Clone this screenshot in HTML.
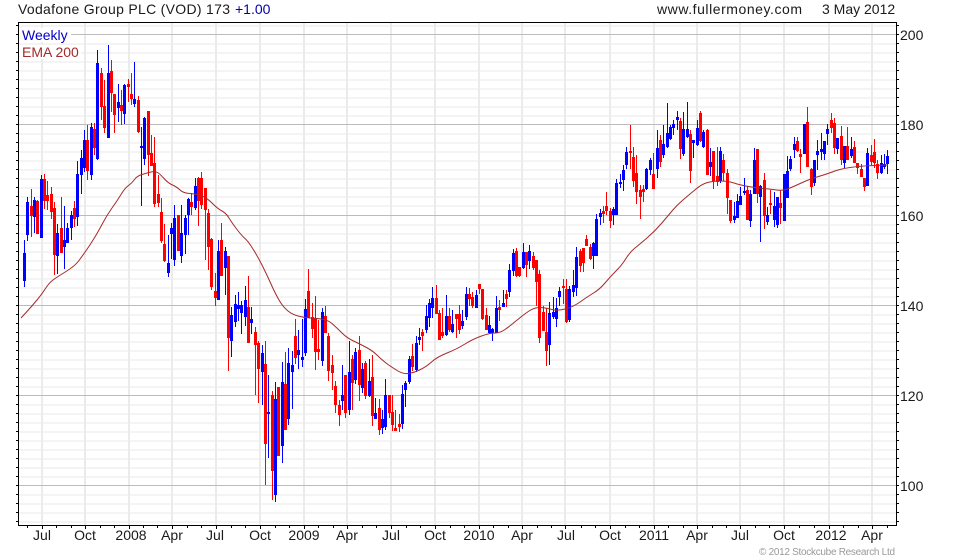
<!DOCTYPE html>
<html><head><meta charset="utf-8"><title>VOD</title>
<style>html,body{margin:0;padding:0;background:#fff;width:980px;height:560px;overflow:hidden}svg{display:block}text{font-family:"Liberation Sans",Arial,sans-serif;font-size:14px;fill:#1a1a1a}</style></head>
<body>
<svg width="980" height="560" viewBox="0 0 980 560" xmlns="http://www.w3.org/2000/svg">
<rect width="980" height="560" fill="#fff"/>
<g shape-rendering="crispEdges">
<path stroke="#f4f4f4" stroke-width="2" transform="translate(0,.5)" fill="none" d="M18 25.5H896M18 43.5H896M18 52.5H896M18 61.5H896M18 70.5H896M18 79.5H896M18 88.5H896M18 97.5H896M18 106.5H896M18 115.5H896M18 133.5H896M18 142.5H896M18 151.5H896M18 160.5H896M18 169.5H896M18 178.5H896M18 187.5H896M18 196.5H896M18 205.5H896M18 224.5H896M18 233.5H896M18 242.5H896M18 251.5H896M18 260.5H896M18 269.5H896M18 278.5H896M18 287.5H896M18 296.5H896M18 314.5H896M18 323.5H896M18 332.5H896M18 341.5H896M18 350.5H896M18 359.5H896M18 368.5H896M18 377.5H896M18 386.5H896M18 404.5H896M18 413.5H896M18 422.5H896M18 431.5H896M18 440.5H896M18 449.5H896M18 458.5H896M18 467.5H896M18 476.5H896M18 494.5H896M18 503.5H896M18 512.5H896M18 521.5H896"/>
<path stroke="#ebebeb" stroke-width="2" transform="translate(-.5,0)" fill="none" d="M42.5 22V525M85.5 22V525M129.5 22V525M172.5 22V525M216.5 22V525M260.5 22V525M304.5 22V525M347.5 22V525M391.5 22V525M435.5 22V525M479.5 22V525M522.5 22V525M565.5 22V525M610.5 22V525M654.5 22V525M697.5 22V525M740.5 22V525M784.5 22V525M829.5 22V525M872.5 22V525"/>
<path stroke="#bbb" fill="none" d="M18 34.5H896M18 124.5H896M18 215.5H896M18 305.5H896M18 395.5H896M18 485.5H896"/>
<rect x="19" y="28" width="52" height="14" fill="#fff"/>
<rect x="19" y="45" width="62" height="14" fill="#fff"/>
<path stroke="#00f" fill="none" d="M24.5 240V287M27.5 197V241M34.5 197V233M41.5 175V238M57.5 224V274M64.5 206V269M67.5 223V243M71.5 211V240M77.5 161V226M81.5 150V194M84.5 130V172M91.5 123V180M97.5 50V160M108.5 45V138M118.5 84V122M124.5 84V124M134.5 62V107M141.5 127V206M144.5 117V165M168.5 235V277M171.5 223V259M174.5 205V266M181.5 205V263M185.5 215V254M188.5 198V235M195.5 178V210M218.5 240V300M225.5 247V295M231.5 307V357M235.5 295V327M238.5 292V321M241.5 301V334M245.5 286V326M251.5 307V334M262.5 345V405M268.5 375V458M275.5 382V502M282.5 362V463M288.5 348V425M292.5 351V409M298.5 330V369M302.5 319V367M305.5 299V356M322.5 308V366M342.5 365V410M349.5 341V415M355.5 348V384M362.5 363V393M369.5 359V397M375.5 398V419M382.5 410V434M385.5 379V430M402.5 385V429M405.5 381V407M409.5 356V384M416.5 336V372M419.5 328V345M426.5 305V333M429.5 299V327M432.5 287V318M446.5 295V336M452.5 310V333M462.5 310V329M466.5 287V320M476.5 290V308M489.5 316V334M492.5 328V341M496.5 296V333M503.5 290V307M509.5 264V297M513.5 249V276M523.5 243V269M529.5 245V269M549.5 302V365M553.5 297V319M556.5 298V327M559.5 287V306M569.5 286V322M573.5 270V297M576.5 247V296M593.5 242V269M596.5 214V256M600.5 209V225M613.5 207V225M616.5 179V215M620.5 174V188M623.5 165V191M626.5 147V169M646.5 168V190M650.5 158V175M657.5 130V178M663.5 125V158M667.5 103V148M670.5 125V140M673.5 120V135M677.5 111V130M683.5 112V156M687.5 102V138M693.5 140V158M697.5 120V146M703.5 130V148M710.5 148V176M720.5 147V183M734.5 202V223M737.5 194V218M740.5 187V205M744.5 178V195M750.5 190V227M754.5 148V194M760.5 185V242M767.5 207V225M774.5 192V227M777.5 197V228M784.5 174V221M787.5 156V198M790.5 156V171M794.5 137V158M804.5 124V154M814.5 160V186M817.5 140V170M821.5 133V160M824.5 141V160M827.5 124V145M837.5 138V154M844.5 146V168M851.5 137V158M867.5 148V186M881.5 155V174M884.5 154V169M887.5 150V174"/>
<path stroke="#00f" stroke-width="3" fill="none" d="M24.5 253V281M27.5 202V235M34.5 200V217M41.5 179V238M57.5 233V256M64.5 240V247M67.5 228V243M71.5 215V228M77.5 174V217M81.5 158V175M84.5 140V168M91.5 127V175M97.5 63V159M108.5 73V138M118.5 102V108M124.5 85V114M134.5 99V104M141.5 146V148M144.5 118V159M168.5 263V273M171.5 228V234M174.5 218V260M181.5 233V256M185.5 218V235M188.5 199V215M195.5 186V208M218.5 251V300M225.5 251V268M231.5 315V341M235.5 304V322M238.5 305V309M241.5 305V313M245.5 300V317M251.5 319V323M262.5 353V372M268.5 412V414M275.5 399V495M282.5 382V446M288.5 363V419M292.5 365V372M298.5 350V355M302.5 357V360M305.5 309V353M322.5 312V361M342.5 395V401M349.5 372V410M355.5 352V380M362.5 369V388M369.5 381V396M375.5 413V419M382.5 419V428M385.5 395V427M402.5 394V424M405.5 383V390M409.5 359V382M416.5 343V370M419.5 337V340M426.5 316V330M429.5 303V318M432.5 298V308M446.5 316V335M452.5 324V332M462.5 321V326M466.5 294V317M476.5 295V308M489.5 325V333M492.5 329V333M496.5 308V333M503.5 303V307M509.5 270V292M513.5 253V271M523.5 252V268M529.5 251V261M549.5 313V345M553.5 312V317M556.5 308V319M559.5 291V297M569.5 289V320M573.5 285V292M576.5 257V288M593.5 243V256M596.5 219V256M600.5 213V217M613.5 209V215M616.5 183V215M620.5 182V184M623.5 170V180M626.5 152V165M646.5 169V189M650.5 160V170M657.5 148V169M663.5 144V155M667.5 133V147M670.5 127V139M673.5 124V128M677.5 117V120M683.5 129V154M687.5 129V137M693.5 140V143M697.5 128V145M703.5 132V147M710.5 162V167M720.5 151V181M734.5 216V220M737.5 201V218M740.5 196V205M744.5 191V193M750.5 194V221M754.5 160V194M760.5 186V197M767.5 215V222M774.5 206V220M777.5 197V225M784.5 174V221M787.5 171V198M790.5 159V169M794.5 144V150M804.5 124V154M814.5 160V183M817.5 151V155M821.5 149V152M824.5 141V154M827.5 129V134M837.5 138V149M844.5 146V163M851.5 149V156M867.5 153V186M881.5 163V173M884.5 164V167M887.5 156V164"/>
<path stroke="#f00" fill="none" d="M31.5 189V237M37.5 200V234M44.5 174V209M47.5 181V210M51.5 187V219M54.5 202V275M61.5 197V253M74.5 201V227M87.5 125V180M94.5 123V155M101.5 68V120M104.5 80V133M111.5 60V112M114.5 94V133M121.5 90V125M128.5 79V102M131.5 73V105M138.5 96V133M148.5 111V176M151.5 135V166M154.5 137V207M158.5 175V207M161.5 198V243M164.5 224V262M178.5 215V251M191.5 193V215M198.5 177V226M201.5 172V209M205.5 188V260M208.5 209V270M211.5 238V290M215.5 273V306M221.5 223V276M228.5 256V371M248.5 276V343M255.5 327V395M258.5 341V403M265.5 341V485M272.5 391V500M278.5 387V456M285.5 352V430M295.5 319V364M308.5 269V318M312.5 303V338M315.5 296V370M318.5 320V360M325.5 306V333M328.5 333V381M332.5 355V390M335.5 381V413M339.5 400V426M345.5 375V418M352.5 355V410M359.5 336V401M365.5 361V399M372.5 355V426M379.5 399V435M389.5 395V418M392.5 395V431M395.5 410V431M399.5 414V432M412.5 344V371M422.5 329V351M436.5 285V314M439.5 310V340M442.5 308V338M449.5 308V332M456.5 314V338M459.5 305V334M469.5 288V306M472.5 292V308M479.5 284V294M482.5 289V320M486.5 308V330M499.5 300V321M506.5 290V307M516.5 248V277M519.5 267V277M526.5 252V277M533.5 252V270M536.5 260V306M539.5 270V343M543.5 306V331M546.5 308V366M563.5 279V304M566.5 279V323M580.5 249V272M583.5 248V272M586.5 235V246M590.5 244V260M603.5 206V223M606.5 192V215M610.5 208V228M630.5 125V169M633.5 147V187M636.5 155V204M640.5 185V219M643.5 185V202M653.5 153V189M660.5 135V167M680.5 118V159M690.5 130V183M700.5 111V142M707.5 129V175M713.5 151V189M717.5 147V186M723.5 154V181M727.5 169V214M730.5 200V223M747.5 186V220M757.5 149V203M764.5 173V229M770.5 190V214M780.5 190V224M797.5 137V152M800.5 149V173M807.5 107V167M811.5 168V195M831.5 113V133M834.5 118V154M841.5 126V165M847.5 127V160M854.5 141V163M857.5 163V174M861.5 164V177M864.5 178V191M871.5 145V165M874.5 139V168M877.5 160V179"/>
<path stroke="#f00" stroke-width="3" fill="none" d="M31.5 206V216M37.5 201V234M44.5 179V201M47.5 195V201M51.5 194V212M54.5 208V255M61.5 228V253M74.5 208V219M87.5 140V171M94.5 129V148M101.5 73V107M104.5 106V128M111.5 71V93M114.5 94V115M121.5 105V111M128.5 84V87M131.5 94V99M138.5 100V132M148.5 111V155M151.5 153V166M154.5 163V204M158.5 194V203M161.5 212V241M164.5 244V261M178.5 215V251M191.5 202V207M198.5 178V201M201.5 178V205M205.5 188V210M208.5 213V247M211.5 239V287M215.5 291V298M221.5 240V276M228.5 256V338M248.5 307V343M255.5 332V345M258.5 343V369M265.5 364V444M272.5 395V471M278.5 387V456M285.5 384V430M295.5 336V358M308.5 291V318M312.5 317V329M315.5 318V352M318.5 349V352M325.5 316V333M328.5 336V371M332.5 365V373M335.5 386V405M339.5 405V415M345.5 375V413M352.5 359V383M359.5 350V385M365.5 363V396M372.5 377V416M379.5 408V430M389.5 395V413M392.5 412V425M395.5 428V431M399.5 424V427M412.5 356V367M422.5 332V336M436.5 298V314M439.5 313V340M442.5 332V336M449.5 316V330M456.5 314V319M459.5 314V330M469.5 294V299M472.5 297V306M479.5 284V289M482.5 289V319M486.5 315V330M499.5 307V310M506.5 294V299M516.5 251V276M519.5 267V276M526.5 252V265M533.5 256V268M536.5 260V282M539.5 274V338M543.5 312V331M546.5 332V351M563.5 286V288M566.5 289V322M580.5 251V266M583.5 248V263M586.5 239V246M590.5 247V259M603.5 211V214M606.5 206V211M610.5 211V221M630.5 151V153M633.5 157V181M636.5 173V192M640.5 190V197M643.5 189V192M653.5 174V189M660.5 140V162M680.5 121V149M690.5 134V171M700.5 113V141M707.5 130V175M713.5 151V181M717.5 176V182M723.5 160V173M727.5 173V198M730.5 200V221M747.5 190V220M757.5 149V194M764.5 180V216M770.5 203V205M780.5 203V208M797.5 141V151M800.5 154V157M807.5 122V167M811.5 169V187M831.5 120V128M834.5 123V148M841.5 136V160M847.5 146V160M854.5 147V163M857.5 163V168M861.5 169V177M864.5 178V187M871.5 155V162M874.5 152V163M877.5 164V173"/>
</g>
<path fill="none" stroke="#a52a2a" stroke-width="1" stroke-linejoin="round" d="M21 318L26.5 312Q32 306 37 300Q42 294 45.5 288.5Q49 283 53 280Q57 277 66 271.5Q75 266 79 260.5Q83 255 86.5 250Q90 245 94 238.5Q98 232 102.5 223.5Q107 215 112 208Q117 201 121 194.5Q125 188 128.5 185.5Q132 183 134.5 179.5Q137 176 142 174.5Q147 173 151 172Q155 171 157.5 172.5Q160 174 164 178.5Q168 183 172.5 185Q177 187 180 190Q183 193 190 193.5Q197 194 202 196Q207 198 212.5 203.5Q218 209 222 211Q226 213 229 218Q232 223 237 229.5Q242 236 245 238.5Q248 241 253 249Q258 257 262.5 266Q267 275 271 284Q275 293 279 300Q283 307 288 311Q293 315 300 316.5Q307 318 317 318.5Q327 319 332 323.5Q337 328 342 333Q347 338 353.5 341Q360 344 366.5 347.5Q373 351 378 356Q383 361 388 364.5Q393 368 398 371Q403 374 408 373.5Q413 373 419.5 370Q426 367 431.5 362Q437 357 447 353Q457 349 465 344Q473 339 481.5 336Q490 333 495 333Q500 333 505 329.5Q510 326 516.5 320.5Q523 315 529 311Q535 307 541 307.5Q547 308 552 309.5Q557 311 565 309Q573 307 580 302Q587 297 593.5 293Q600 289 605 283Q610 277 616 271Q622 265 626 258.5Q630 252 635 248Q640 244 647.5 237.5Q655 231 661 224Q667 217 672 211Q677 205 683.5 199.5Q690 194 696 189Q702 184 707.5 182.5Q713 181 720.5 181Q728 181 734 183Q740 185 748.5 186.5Q757 188 763.5 188.5Q770 189 776.5 190Q783 191 790 188Q797 185 803.5 182Q810 179 818.5 176.5Q827 174 833.5 171.5Q840 169 850 167.5Q860 166 874 165.5L888 165"/>
<g shape-rendering="crispEdges">
<path stroke="#000" fill="none" d="M18.5 22.5H896.5V525.5H18.5Z"/>
<path stroke="#000" fill="none" d="M16 25.5H18M16 34.5H18M16 43.5H18M16 52.5H18M16 61.5H18M16 70.5H18M16 79.5H18M16 88.5H18M16 97.5H18M16 106.5H18M16 115.5H18M16 124.5H18M16 133.5H18M16 142.5H18M16 151.5H18M16 160.5H18M16 169.5H18M16 178.5H18M16 187.5H18M16 196.5H18M16 205.5H18M16 215.5H18M16 224.5H18M16 233.5H18M16 242.5H18M16 251.5H18M16 260.5H18M16 269.5H18M16 278.5H18M16 287.5H18M16 296.5H18M16 305.5H18M16 314.5H18M16 323.5H18M16 332.5H18M16 341.5H18M16 350.5H18M16 359.5H18M16 368.5H18M16 377.5H18M16 386.5H18M16 395.5H18M16 404.5H18M16 413.5H18M16 422.5H18M16 431.5H18M16 440.5H18M16 449.5H18M16 458.5H18M16 467.5H18M16 476.5H18M16 485.5H18M16 494.5H18M16 503.5H18M16 512.5H18M16 521.5H18"/>
<path stroke="#000" fill="none" d="M897 25.5H899M897 34.5H899M897 43.5H899M897 52.5H899M897 61.5H899M897 70.5H899M897 79.5H899M897 88.5H899M897 97.5H899M897 106.5H899M897 115.5H899M897 124.5H899M897 133.5H899M897 142.5H899M897 151.5H899M897 160.5H899M897 169.5H899M897 178.5H899M897 187.5H899M897 196.5H899M897 205.5H899M897 215.5H899M897 224.5H899M897 233.5H899M897 242.5H899M897 251.5H899M897 260.5H899M897 269.5H899M897 278.5H899M897 287.5H899M897 296.5H899M897 305.5H899M897 314.5H899M897 323.5H899M897 332.5H899M897 341.5H899M897 350.5H899M897 359.5H899M897 368.5H899M897 377.5H899M897 386.5H899M897 395.5H899M897 404.5H899M897 413.5H899M897 422.5H899M897 431.5H899M897 440.5H899M897 449.5H899M897 458.5H899M897 467.5H899M897 476.5H899M897 485.5H899M897 494.5H899M897 503.5H899M897 512.5H899M897 521.5H899"/>
<path stroke="#000" fill="none" d="M27.5 526V528M42.5 526V529M56.5 526V528M71.5 526V528M85.5 526V529M100.5 526V528M114.5 526V528M129.5 526V529M143.5 526V528M157.5 526V528M172.5 526V529M187.5 526V528M201.5 526V528M216.5 526V529M231.5 526V528M245.5 526V528M260.5 526V529M275.5 526V528M289.5 526V528M304.5 526V529M318.5 526V528M333.5 526V528M347.5 526V529M362.5 526V528M376.5 526V528M391.5 526V529M406.5 526V528M420.5 526V528M435.5 526V529M450.5 526V528M464.5 526V528M479.5 526V529M493.5 526V528M508.5 526V528M522.5 526V529M537.5 526V528M551.5 526V528M565.5 526V529M581.5 526V528M595.5 526V528M610.5 526V529M625.5 526V528M639.5 526V528M654.5 526V529M668.5 526V528M683.5 526V528M697.5 526V529M712.5 526V528M726.5 526V528M740.5 526V529M755.5 526V528M769.5 526V528M784.5 526V529M799.5 526V528M814.5 526V528M829.5 526V529M843.5 526V528M858.5 526V528M872.5 526V529M887.5 526V528"/>
</g>
<text x="18" y="14" textLength="212">Vodafone Group PLC (VOD) 173</text>
<text x="235" y="14" style="fill:#00a">+1.00</text>
<text x="657" y="14" textLength="145">www.fullermoney.com</text>
<text x="822" y="14">3 May 2012</text>
<text x="22" y="40" style="fill:#00c">Weekly</text>
<text x="22" y="57" style="fill:#a52a2a">EMA 200</text>
<text x="900" y="40">200</text>
<text x="900" y="130">180</text>
<text x="900" y="221">160</text>
<text x="900" y="311">140</text>
<text x="900" y="401">120</text>
<text x="900" y="491">100</text>
<g text-anchor="middle">
<text x="42" y="540">Jul</text><text x="85" y="540">Oct</text><text x="131" y="540">2008</text><text x="172" y="540">Apr</text><text x="215" y="540">Jul</text><text x="260" y="540">Oct</text><text x="304" y="540">2009</text><text x="347" y="540">Apr</text><text x="391" y="540">Jul</text><text x="435" y="540">Oct</text><text x="479" y="540">2010</text><text x="522" y="540">Apr</text><text x="566" y="540">Jul</text><text x="610" y="540">Oct</text><text x="654" y="540">2011</text><text x="697" y="540">Apr</text><text x="740" y="540">Jul</text><text x="784" y="540">Oct</text><text x="831" y="540">2012</text><text x="872" y="540">Apr</text>
</g>
<text x="759" y="555" textLength="136" style="font-size:10px;fill:#999">© 2012 Stockcube Research Ltd</text>
</svg>
</body></html>
